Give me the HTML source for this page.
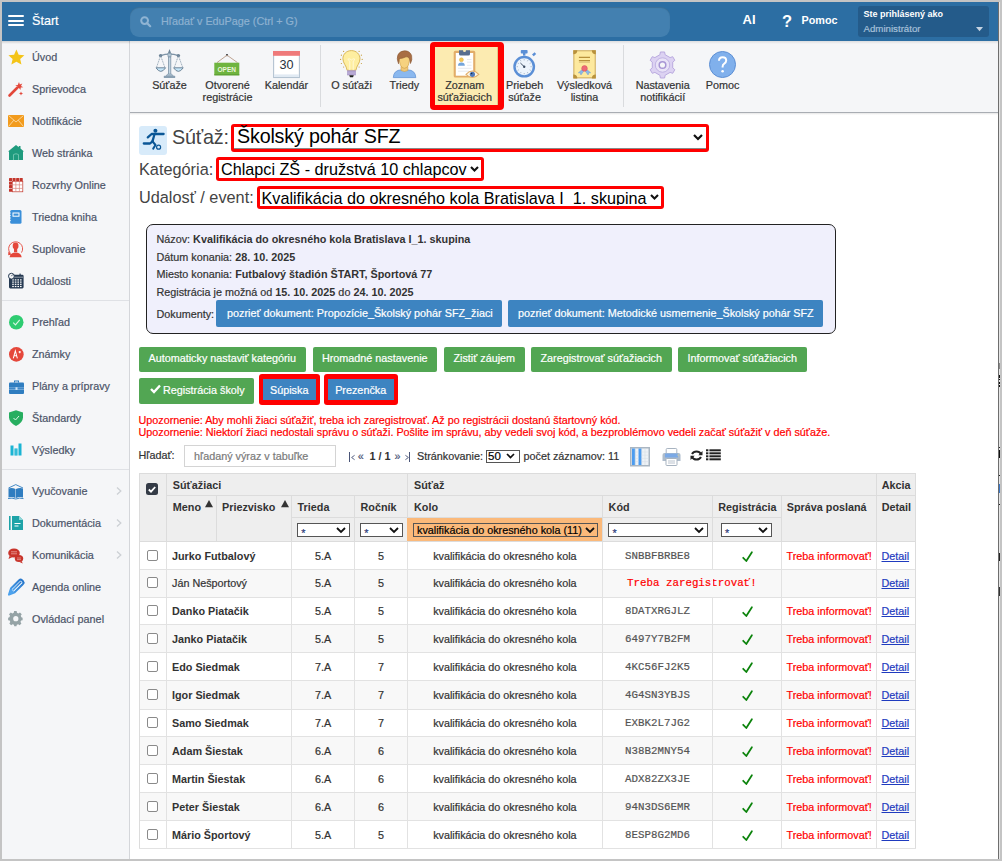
<!DOCTYPE html>
<html><head><meta charset="utf-8"><style>
*{box-sizing:border-box;margin:0;padding:0}
html,body{width:1002px;height:861px;overflow:hidden;background:#c4c4c4}
body{font-family:"Liberation Sans",sans-serif;font-size:10.8px;color:#333;position:relative}
.a{position:absolute;white-space:nowrap;line-height:normal;-webkit-text-stroke:0.2px currentColor}
b,.bd{-webkit-text-stroke:0 !important}
svg.a{overflow:visible}
</style></head><body>
<div class="a" style="left:2px;top:2px;width:996px;height:857px;background:#fff"></div>
<div class="a" style="left:998px;top:2px;width:1px;height:857px;background:#6e6e6e"></div>
<div class="a" style="left:999px;top:2px;width:1px;height:857px;background:#e6e6e6"></div>
<div class="a" style="left:2px;top:2px;width:996px;height:39px;background:#2c6ea3"></div>
<div class="a" style="left:7.5px;top:14.75px;width:16px;height:2px;background:#fff;border-radius:1px"></div>
<div class="a" style="left:7.5px;top:19.5px;width:16px;height:2px;background:#fff;border-radius:1px"></div>
<div class="a" style="left:7.5px;top:24.25px;width:16px;height:2px;background:#fff;border-radius:1px"></div>
<div class="a" style="left:32px;top:14px;font-size:12.6px;color:#fff;-webkit-text-stroke:0.2px #fff">Štart</div>
<div class="a" style="left:130px;top:6.5px;width:540px;height:30.5px;background:#4380b0;border-radius:9px;box-shadow:inset 0 1px 1px rgba(0,0,0,.15)"></div>
<svg class="a" style="left:140px;top:16px" width="11" height="11" viewBox="0 0 11 11"><circle cx="4.6" cy="4.6" r="3.4" fill="none" stroke="#90b4d3" stroke-width="2"/><line x1="7.2" y1="7.2" x2="10.2" y2="10.2" stroke="#90b4d3" stroke-width="2.2" stroke-linecap="round"/></svg>
<div class="a" style="left:161px;top:15px;font-size:10.8px;color:#8db1d0;">Hľadať v EduPage (Ctrl + G)</div>
<div class="a bd" style="left:742.5px;top:12px;font-size:13px;color:#fff;font-weight:bold;">AI</div>
<div class="a bd" style="left:782px;top:11.5px;font-size:16.5px;color:#fff;font-weight:bold;">?</div>
<div class="a bd" style="left:801.5px;top:14px;font-size:10.8px;color:#fff;font-weight:bold;">Pomoc</div>
<div class="a" style="left:858px;top:6px;width:131px;height:31px;background:#245b8a;border-radius:3px"></div>
<div class="a bd" style="left:863.5px;top:9px;font-size:9px;color:#fff;font-weight:bold;">Ste prihlásený ako</div>
<div class="a" style="left:863.5px;top:23px;font-size:9.7px;color:#a7c0d9;">Administrátor</div>
<svg class="a" style="left:975.5px;top:26.7px" width="7" height="4.3" viewBox="0 0 7 4.3"><path d="M0 0H7L3.5 4.3Z" fill="#c6d4e2"/></svg>
<div class="a" style="left:2px;top:41px;width:127px;height:818px;background:#f5f6f8"></div>
<div class="a" style="left:129px;top:41px;width:1px;height:818px;background:#d4d6da"></div>
<div class="a" style="left:2px;top:41px;width:996px;height:3px;background:linear-gradient(rgba(0,0,0,.16),rgba(0,0,0,0))"></div>
<svg class="a" style="left:7.6px;top:49px" width="16.8" height="15.8" viewBox="0 0 16 15" preserveAspectRatio="none"><path d="M8 0.5L10.2 5.4L15.6 5.9L11.6 9.5L12.8 14.8L8 12L3.2 14.8L4.4 9.5L0.4 5.9L5.8 5.4Z" fill="#f4c418"/></svg>
<div class="a" style="left:32px;top:51px;font-size:10.8px;color:#4b5468;">Úvod</div>
<svg class="a" style="left:8px;top:81px" width="16" height="16" viewBox="0 0 16 16" preserveAspectRatio="none"><path d="M1.5 14.5L9 7" stroke="#e3473a" stroke-width="2.6" stroke-linecap="round"/><path d="M11 1L11.8 3.4L14.3 2.6L13 4.9L15.3 6.2L12.7 6.4L12.5 9L11 6.9L8.8 8.1L9.6 5.7L7.3 4.6L9.8 4.1Z" fill="#e3473a"/><path d="M13 10.5L13.7 12L15.2 12.5L13.7 13L13 14.5L12.3 13L10.8 12.5L12.3 12Z" fill="#e3473a"/></svg>
<div class="a" style="left:32px;top:83px;font-size:10.8px;color:#4b5468;">Sprievodca</div>
<svg class="a" style="left:8px;top:115px" width="16" height="12" viewBox="0 0 16 12" preserveAspectRatio="none"><rect x="0" y="0" width="16" height="12" fill="#f29b1d"/><path d="M0.5 0.5L8 7L15.5 0.5M0.5 11.5L5.8 5.2M15.5 11.5L10.2 5.2" stroke="#fbe3b8" stroke-width="0.8" fill="none"/></svg>
<div class="a" style="left:32px;top:115px;font-size:10.8px;color:#4b5468;">Notifikácie</div>
<svg class="a" style="left:8px;top:145px" width="16" height="15" viewBox="0 0 16 15" preserveAspectRatio="none"><path d="M8 0L0 6.5H1V15H15V6.5H16L12.5 3.6V1H10.8V2.2Z" fill="#1f9b7e"/><path d="M5.5 15V9.5Q8 8 10.5 9.5V15" fill="none" stroke="#6cc3ad" stroke-width="1"/></svg>
<div class="a" style="left:32px;top:147px;font-size:10.8px;color:#4b5468;">Web stránka</div>
<svg class="a" style="left:9px;top:178px" width="14" height="14" viewBox="0 0 14 14" preserveAspectRatio="none"><rect x="0.00" y="0" width="3.1" height="3.1" rx="0.6" fill="#c3352b"/><rect x="3.55" y="0" width="3.1" height="3.1" rx="0.6" fill="#c3352b"/><rect x="7.10" y="0" width="3.1" height="3.1" rx="0.6" fill="#c3352b"/><rect x="10.65" y="0" width="3.1" height="3.1" rx="0.6" fill="#c3352b"/><rect x="0" y="3.55" width="3.1" height="3.1" rx="0.6" fill="#c3352b"/><rect x="0" y="7.10" width="3.1" height="3.1" rx="0.6" fill="#c3352b"/><rect x="0" y="10.65" width="3.1" height="3.1" rx="0.6" fill="#c3352b"/><rect x="3.3" y="3.3" width="10.5" height="10.5" fill="#fff" stroke="#c3352b" stroke-width="0.7"/><path d="M6.85 3.3V13.8M10.4 3.3V13.8M3.3 6.85H13.8M3.3 10.4H13.8" stroke="#d8857e" stroke-width="0.7"/></svg>
<div class="a" style="left:32px;top:179px;font-size:10.8px;color:#4b5468;">Rozvrhy Online</div>
<svg class="a" style="left:9px;top:210px" width="13" height="14" viewBox="0 0 13 14" preserveAspectRatio="none"><rect x="1.2" y="0" width="11.3" height="13.8" rx="1.5" fill="#3a8fd9"/><rect x="4" y="3" width="6" height="3.2" fill="none" stroke="#fff" stroke-width="1"/><path d="M0 3h2M0 5.5h2M0 8h2M0 10.5h2" stroke="#fff" stroke-width="0.6"/></svg>
<div class="a" style="left:32px;top:211px;font-size:10.8px;color:#4b5468;">Triedna kniha</div>
<svg class="a" style="left:7px;top:240px" width="17" height="18" viewBox="0 0 17 18" preserveAspectRatio="none"><path d="M3.2 13.2A7 7 0 1 1 14.5 12.6" fill="none" stroke="#e4473a" stroke-width="0.9"/><path d="M1.4 11.6L4.6 14.6L1.2 15.2Z" fill="#e4473a"/><ellipse cx="8.6" cy="5.9" rx="2.9" ry="3.3" fill="#e4473a"/><rect x="7" y="8" width="3.2" height="4" fill="#e4473a"/><path d="M2.6 17.2Q3 13.3 7.5 12.6H9.7Q14.2 13.3 14.7 17.2Z" fill="#e4473a"/></svg>
<div class="a" style="left:32px;top:243px;font-size:10.8px;color:#4b5468;">Suplovanie</div>
<svg class="a" style="left:7.5px;top:273px" width="16" height="16" viewBox="0 0 16 16" preserveAspectRatio="none"><rect x="1" y="1.8" width="14.6" height="13.6" rx="1.3" fill="#263a52"/><rect x="4" y="1" width="1.2" height="2" fill="#263a52"/><rect x="11.5" y="0.6" width="1.2" height="2.2" fill="#263a52"/><path d="M1.8 4.2H15" stroke="#fff" stroke-width="0.5"/><rect x="4.2" y="6.3" width="1.6" height="1.2" fill="#fff"/><rect x="4.2" y="8.5" width="1.6" height="1.2" fill="#fff"/><rect x="4.2" y="10.7" width="1.6" height="1.2" fill="#fff"/><rect x="4.2" y="12.9" width="1.6" height="1.2" fill="#fff"/><rect x="6.8" y="6.3" width="1.6" height="1.2" fill="#fff"/><rect x="6.8" y="8.5" width="1.6" height="1.2" fill="#fff"/><rect x="6.8" y="10.7" width="1.6" height="1.2" fill="#fff"/><rect x="6.8" y="12.9" width="1.6" height="1.2" fill="#fff"/><rect x="9.4" y="6.3" width="1.6" height="1.2" fill="#fff"/><rect x="9.4" y="8.5" width="1.6" height="1.2" fill="#fff"/><rect x="9.4" y="10.7" width="1.6" height="1.2" fill="#fff"/><rect x="9.4" y="12.9" width="1.6" height="1.2" fill="#fff"/><rect x="12.0" y="6.3" width="1.6" height="1.2" fill="#fff"/><rect x="12.0" y="8.5" width="1.6" height="1.2" fill="#fff"/><rect x="12.0" y="10.7" width="1.6" height="1.2" fill="#fff"/><rect x="12.0" y="12.9" width="1.6" height="1.2" fill="#fff"/><circle cx="3.4" cy="3.2" r="2.9" fill="#f5f6f8" stroke="#263a52" stroke-width="1"/><path d="M3.4 3.2L4.6 1.6" stroke="#263a52" stroke-width="0.8"/></svg>
<div class="a" style="left:32px;top:275px;font-size:10.8px;color:#4b5468;">Udalosti</div>
<svg class="a" style="left:8.8px;top:314.6px" width="14.5" height="14.5" viewBox="0 0 13 13" preserveAspectRatio="none"><circle cx="6.5" cy="6.5" r="6.5" fill="#2ecc71"/><path d="M3.8 6.8L5.8 8.8L9.6 4.4" stroke="#d8f7e4" stroke-width="1" fill="none"/></svg>
<div class="a" style="left:32px;top:316px;font-size:10.8px;color:#4b5468;">Prehľad</div>
<svg class="a" style="left:8.6px;top:346.8px" width="14.7" height="14.7" viewBox="0 0 13 13" preserveAspectRatio="none"><circle cx="6.5" cy="6.5" r="6.5" fill="#e5473b"/><path d="M3.8 10L5.6 3.5L7.4 10M4.4 7.8H6.8M8.5 4.5H10.5M9.5 3.5V5.5" stroke="#fff" stroke-width="0.9" fill="none"/></svg>
<div class="a" style="left:32px;top:348px;font-size:10.8px;color:#4b5468;">Známky</div>
<svg class="a" style="left:9px;top:379.5px" width="15" height="14.5" viewBox="0 0 15 14" preserveAspectRatio="none"><rect x="0" y="2.5" width="15" height="11" rx="1" fill="#2f7dc0"/><path d="M5.5 2.5V1H9.5V2.5" stroke="#2f7dc0" stroke-width="1" fill="none"/><path d="M0 7.5H15M0 9.2H15" stroke="#9ac4e8" stroke-width="0.6"/><rect x="6.5" y="7" width="2" height="2.6" fill="#cfe3f5"/></svg>
<div class="a" style="left:32px;top:380px;font-size:10.8px;color:#4b5468;">Plány a prípravy</div>
<svg class="a" style="left:9px;top:410px" width="14" height="16" viewBox="0 0 14 16" preserveAspectRatio="none"><path d="M7 0.2L14 2.6V7.5Q13.6 13 7 16Q0.4 13 0 7.5V2.6Z" fill="#27ae60"/><path d="M4.5 8L6.5 10L10 6" stroke="#dff5e7" stroke-width="1" fill="none"/></svg>
<div class="a" style="left:32px;top:412px;font-size:10.8px;color:#4b5468;">Štandardy</div>
<svg class="a" style="left:10px;top:443px" width="12" height="13" viewBox="0 0 12 13" preserveAspectRatio="none"><rect x="0.5" y="2.5" width="3" height="10" fill="#1ab4d3"/><rect x="4.5" y="5.5" width="3" height="7" fill="#6fd1e5"/><rect x="8.5" y="0.5" width="3" height="12" fill="#1ab4d3"/><rect x="4.5" y="5.5" width="3" height="7" fill="#1ab4d3" opacity=".7"/></svg>
<div class="a" style="left:32px;top:444px;font-size:10.8px;color:#4b5468;">Výsledky</div>
<svg class="a" style="left:8px;top:484px" width="16" height="16" viewBox="0 0 16 16" preserveAspectRatio="none"><path d="M0.5 4.5Q4 3.5 7.5 5V14Q4 12.5 0.5 13.5Z" fill="#2f7dc0"/><path d="M15 4.5Q11.5 3.5 8 5V14Q11.5 12.5 15 13.5Z" fill="#2f7dc0"/><path d="M0.5 4L7.75 0.6L15 4" stroke="#2f7dc0" stroke-width="0.9" fill="none"/><path d="M0 14.6Q4 13.5 7.75 15Q11.5 13.5 15.5 14.6" stroke="#2f7dc0" stroke-width="0.9" fill="none"/></svg>
<div class="a" style="left:32px;top:485px;font-size:10.8px;color:#4b5468;">Vyučovanie</div>
<svg class="a" style="left:9px;top:515.5px" width="14" height="14" viewBox="0 0 14 14" preserveAspectRatio="none"><rect x="0" y="0" width="1.6" height="14" fill="#1ea3a8"/><path d="M3 0H10L14 4V14H3Z" fill="#1ea3a8"/><path d="M10 0V4H14" fill="#8ed6d8"/><path d="M5.5 7.5H11.5M5.5 10H9.5" stroke="#fff" stroke-width="1.2"/></svg>
<div class="a" style="left:32px;top:517px;font-size:10.8px;color:#4b5468;">Dokumentácia</div>
<svg class="a" style="left:8px;top:548px" width="16" height="16" viewBox="0 0 16 16" preserveAspectRatio="none"><ellipse cx="6" cy="5" rx="5.8" ry="4.6" fill="#c8342b"/><path d="M1.5 8L0.5 11L4.5 9Z" fill="#c8342b"/><ellipse cx="11" cy="10.5" rx="4.2" ry="3.6" fill="#c8342b"/><path d="M13.5 13L14.8 15.5L11.5 14Z" fill="#c8342b"/><path d="M3 3.8H9M3 5.8H9" stroke="#e9a39d" stroke-width="0.8"/><path d="M9 10H13M9 11.6H13" stroke="#e9a39d" stroke-width="0.7"/></svg>
<div class="a" style="left:32px;top:549px;font-size:10.8px;color:#4b5468;">Komunikácia</div>
<svg class="a" style="left:7.8px;top:578.5px" width="16" height="17" viewBox="0 0 16 17" preserveAspectRatio="none"><defs><linearGradient id="pg" x1="0" y1="1" x2="1" y2="0"><stop offset="0" stop-color="#4ea3ee"/><stop offset="1" stop-color="#2474c9"/></linearGradient></defs><path d="M1 15.6L3 9.6L11.3 1.3Q12.6 0.1 13.9 1.3L14.9 2.3Q16.1 3.6 14.9 4.9L6.6 13.2Z" fill="#fff" stroke="url(#pg)" stroke-width="2.1" stroke-linejoin="round"/><path d="M4.6 11.4L13.2 2.8" stroke="url(#pg)" stroke-width="1.5"/><path d="M0.6 16L2.8 9.8L6.4 13.4Z" fill="#4ea3ee"/></svg>
<div class="a" style="left:32px;top:581px;font-size:10.8px;color:#4b5468;">Agenda online</div>
<svg class="a" style="left:8px;top:610.5px" width="16" height="16" viewBox="0 0 16 16" preserveAspectRatio="none"><path d="M6 0H9L9.4 2.2L11 3L12.9 1.7L15 3.8L13.8 5.6L14.5 7.4L16 7.8V10.8L14.2 11.2L13.5 12.8L14.6 14.6L12.5 16.7L10.8 15.5L9.2 16.2L8.8 18H6.2L5.8 16.2L4.2 15.5L2.5 16.7L0.4 14.6L1.5 12.8L0.8 11.2L-1 10.8V7.8L0.5 7.4L1.2 5.6L0 3.8L2.1 1.7L4 3L5.6 2.2Z" transform="translate(1,0) scale(0.85)" fill="#95a3a6"/><circle cx="7.8" cy="7.7" r="2.6" fill="#f5f6f8"/></svg>
<div class="a" style="left:32px;top:613px;font-size:10.8px;color:#4b5468;">Ovládací panel</div>
<div class="a" style="left:2px;top:300px;width:127px;height:1px;background:#dfe1e5"></div>
<div class="a" style="left:2px;top:469px;width:127px;height:1px;background:#dfe1e5"></div>
<svg class="a" style="left:116.3px;top:487px" width="6" height="8" viewBox="0 0 6 8"><path d="M1 0.5L4.8 4L1 7.5" stroke="#ccd0d4" stroke-width="1.3" fill="none"/></svg>
<svg class="a" style="left:116.3px;top:519px" width="6" height="8" viewBox="0 0 6 8"><path d="M1 0.5L4.8 4L1 7.5" stroke="#ccd0d4" stroke-width="1.3" fill="none"/></svg>
<svg class="a" style="left:116.3px;top:551px" width="6" height="8" viewBox="0 0 6 8"><path d="M1 0.5L4.8 4L1 7.5" stroke="#ccd0d4" stroke-width="1.3" fill="none"/></svg>
<div class="a" style="left:130px;top:41px;width:868px;height:71px;background:#f5f6f8"></div>
<div class="a" style="left:130px;top:112px;width:868px;height:1px;background:#a9adb3"></div>
<div class="a" style="left:130px;top:113px;width:868px;height:2px;background:linear-gradient(rgba(0,0,0,.10),rgba(0,0,0,0))"></div>
<div class="a" style="left:130px;top:41px;width:868px;height:3px;background:linear-gradient(rgba(0,0,0,.10),rgba(0,0,0,0))"></div>
<div class="a" style="left:319.5px;top:45px;width:1px;height:62px;background:#d9dbde"></div>
<div class="a" style="left:623px;top:45px;width:1px;height:62px;background:#d9dbde"></div>
<div class="a" style="left:430px;top:42px;width:74px;height:68px;background:#ff0000;border-radius:4px"></div>
<div class="a" style="left:435px;top:47px;width:63px;height:58px;background:#fcebb1"></div>
<div class="a" style="left:497px;top:47px;width:1px;height:58px;background:#e2c98a"></div>
<svg class="a" style="left:150px;top:46px" width="40" height="34" viewBox="0 0 40 34"><path d="M19.5 3L21 7H18Z" fill="#6f869a"/><path d="M10.6 9.6Q19.5 6.8 28.4 9.6" stroke="#7d93a6" stroke-width="1.3" fill="none"/><circle cx="10.6" cy="9.6" r="1.7" fill="#6b8296"/><circle cx="28.4" cy="9.6" r="1.7" fill="#6b8296"/><path d="M17.6 7.5H21.4L20.8 11H18.2Z" fill="#b3c7d6" stroke="#7d93a6" stroke-width="0.7"/><rect x="18.4" y="11" width="2.4" height="17.5" fill="#c3d6e4" stroke="#7d93a6" stroke-width="0.8"/><path d="M17.6 28H21.6L23.2 30H16Z" fill="#b3c7d6" stroke="#7d93a6" stroke-width="0.6"/><rect x="13.8" y="29.8" width="11.4" height="2.2" rx="0.6" fill="#8aa0b2"/><path d="M10.6 9.6L6.4 21.8M10.6 9.6L15 21.8M28.4 9.6L24.2 21.8M28.4 9.6L32.8 21.8" stroke="#7d93a6" stroke-width="0.75" stroke-dasharray="1.2 0.6"/><path d="M6 21.8Q10.8 29 15.6 21.8Z" fill="#c5e6f8" stroke="#6f869a" stroke-width="1"/><path d="M23.6 21.8Q28.4 29 33.2 21.8Z" fill="#c5e6f8" stroke="#6f869a" stroke-width="1"/></svg>
<div class="a" style="left:109.5px;top:78.5px;width:120px;text-align:center;font-size:10.8px;color:#333;">Súťaže</div>
<svg class="a" style="left:213.5px;top:53.5px" width="26" height="22" viewBox="0 0 26 22"><circle cx="13" cy="1.2" r="1.1" fill="#2a2f36"/><path d="M3 8.6L13 1.2L23.5 8.6" stroke="#b89a86" stroke-width="0.9" fill="none"/><rect x="0.3" y="8.7" width="25" height="12.6" fill="#6fb43f"/><rect x="0.3" y="20.3" width="25" height="1" fill="#5a9a33"/><text x="12.8" y="18.3" text-anchor="middle" font-family="Liberation Sans" font-weight="bold" font-size="8" fill="#e9f5dc" transform="translate(12.8 0) scale(0.82 1) translate(-12.8 0)">OPEN</text></svg>
<div class="a" style="left:167.5px;top:78.5px;width:120px;text-align:center;font-size:10.8px;color:#333;">Otvorené</div>
<div class="a" style="left:167.5px;top:90.5px;width:120px;text-align:center;font-size:10.8px;color:#333;">registrácie</div>
<svg class="a" style="left:273px;top:51px" width="27" height="27" viewBox="0 0 27 27"><rect x="0.6" y="0.5" width="25.8" height="26" fill="#fff" stroke="#b4c3d1" stroke-width="1.1"/><rect x="0" y="0" width="27" height="4.8" fill="#ef7a7a"/><rect x="1.1" y="23.4" width="24.8" height="2.6" fill="#e1eaf3"/><text x="13.5" y="18.3" text-anchor="middle" font-family="Liberation Sans" font-size="12.6" fill="#27313d">30</text></svg>
<div class="a" style="left:226.39999999999998px;top:78.5px;width:120px;text-align:center;font-size:10.8px;color:#333;">Kalendár</div>
<svg class="a" style="left:336px;top:46px" width="32" height="36" viewBox="0 0 32 36"><path d="M15.4 4.6C10.2 4.6 6.9 8.4 6.9 12.8C6.9 17.2 10.5 19.6 11.1 24.3H19.9C20.5 19.6 24 17.2 24 12.8C24 8.4 20.6 4.6 15.4 4.6Z" fill="#feeea0" stroke="#d6b14f" stroke-width="0.9"/><path d="M13.8 24V15.2L11.8 13.4Q13 12.2 14.2 13.2L15.4 14L16.6 13.2Q17.8 12.2 19 13.4L17.2 15.2V24" stroke="#fff9dc" stroke-width="0.9" fill="none"/><rect x="11.1" y="24.3" width="8.8" height="5" fill="#a998c9"/><path d="M11.3 26.2H19.7M11.3 27.8H19.7" stroke="#cdc2e3" stroke-width="0.6"/><path d="M13.2 29.3H17.8L17 31.3H14Z" fill="#222"/><circle cx="4.6" cy="13.4" r="0.6" fill="#c9a040"/><circle cx="5.4" cy="9.2" r="0.6" fill="#c9a040"/><circle cx="5.4" cy="17.5" r="0.6" fill="#c9a040"/><circle cx="7.6" cy="5.4" r="0.6" fill="#c9a040"/><circle cx="7.6" cy="21" r="0.6" fill="#c9a040"/><circle cx="26.2" cy="13.4" r="0.6" fill="#c9a040"/><circle cx="25.4" cy="9.2" r="0.6" fill="#c9a040"/><circle cx="25.4" cy="17.5" r="0.6" fill="#c9a040"/><circle cx="23.1" cy="5.4" r="0.6" fill="#c9a040"/><circle cx="23.1" cy="21" r="0.6" fill="#c9a040"/></svg>
<div class="a" style="left:291.5px;top:78.5px;width:120px;text-align:center;font-size:10.8px;color:#333;">O súťaži</div>
<svg class="a" style="left:388px;top:48px" width="32" height="32" viewBox="0 0 32 32"><path d="M5.3 29.6Q5.6 22 13.5 21.9H19.5Q27.5 22 27.8 29.6Z" fill="#8ab8ef" stroke="#5f92d6" stroke-width="0.8"/><path d="M13 18.5V22.5Q16.4 24.5 19.8 22.5V18.5Z" fill="#f0c878" stroke="#cf9f4a" stroke-width="0.6"/><path d="M11.2 7.5Q11 20.3 16.4 20.3Q21.8 20.3 21.6 7.5Z" fill="#f6d27f" stroke="#d3a34c" stroke-width="0.7"/><path d="M10.5 15.8Q8.3 10.5 10 6.5Q12.5 2.6 16.8 2.8Q22 3 23.6 7.5Q24.6 11.5 22.5 15.5L21.6 11Q20.5 8.2 18 8.8Q14 10.8 11.3 10.5Z" fill="#a86e44" stroke="#8a5733" stroke-width="0.6"/></svg>
<div class="a" style="left:344.3px;top:78.5px;width:120px;text-align:center;font-size:10.8px;color:#333;">Triedy</div>
<svg class="a" style="left:448px;top:46px" width="36" height="36" viewBox="0 0 36 36"><rect x="5.7" y="4.8" width="21.6" height="26.8" rx="1.6" fill="#e2ad69"/><rect x="7.8" y="7" width="17.4" height="22.7" fill="#fff"/><path d="M11 4.3H22V8Q22 9.6 20.4 9.6H12.6Q11 9.6 11 8Z" fill="#566d8f"/><circle cx="16.5" cy="4.6" r="1.5" fill="#f5e7b5"/><circle cx="13.4" cy="13.8" r="2" fill="#f4c654" stroke="#dcae44" stroke-width="0.5"/><path d="M10 19.7Q10 16.4 13.4 16.4Q16.8 16.4 16.8 19.7Z" fill="#74a5db"/><path d="M19 13.5H23.5M19 16.2H23.5M19 19.3H23.5M10 22.3H23.5M10 25.2H21" stroke="#dfe5ec" stroke-width="0.8"/><path d="M18 28.3Q24.4 21.8 30.8 28.3Q24.4 34.8 18 28.3Z" fill="#fff7e4" stroke="#e2ad69" stroke-width="1.1"/><circle cx="24.4" cy="28.3" r="2.6" fill="#4f78ba"/><circle cx="23.6" cy="27.5" r="0.8" fill="#1d2c44"/></svg>
<div class="a" style="left:404.7px;top:78.5px;width:120px;text-align:center;font-size:10.8px;color:#333;">Zoznam</div>
<div class="a" style="left:404.7px;top:90.5px;width:120px;text-align:center;font-size:10.8px;color:#333;">súťažiacich</div>
<svg class="a" style="left:511.8px;top:50px" width="25" height="28" viewBox="0 0 25 28"><rect x="8.8" y="0" width="6.8" height="3.6" rx="0.8" fill="#5b8fd6"/><rect x="11" y="3" width="2.4" height="2.6" fill="#5b8fd6"/><path d="M20 4.4L22.6 2.2L24.2 4L21.7 6.3Z" fill="#5b8fd6"/><circle cx="12.2" cy="16.7" r="10.9" fill="#5b8fd6"/><circle cx="12.2" cy="16.7" r="8.5" fill="#edf4fc"/><path d="M12.2 16.7L8.4 13" stroke="#3c4d63" stroke-width="1"/><circle cx="12.2" cy="16.7" r="1.2" fill="#3c4d63"/><path d="M18.50 16.70L19.70 16.70" stroke="#8a9cb3" stroke-width="0.7"/><path d="M17.66 19.85L18.70 20.45" stroke="#8a9cb3" stroke-width="0.7"/><path d="M15.35 22.16L15.95 23.20" stroke="#8a9cb3" stroke-width="0.7"/><path d="M12.20 23.00L12.20 24.20" stroke="#8a9cb3" stroke-width="0.7"/><path d="M9.05 22.16L8.45 23.20" stroke="#8a9cb3" stroke-width="0.7"/><path d="M6.74 19.85L5.70 20.45" stroke="#8a9cb3" stroke-width="0.7"/><path d="M5.90 16.70L4.70 16.70" stroke="#8a9cb3" stroke-width="0.7"/><path d="M6.74 13.55L5.70 12.95" stroke="#8a9cb3" stroke-width="0.7"/><path d="M9.05 11.24L8.45 10.20" stroke="#8a9cb3" stroke-width="0.7"/><path d="M12.20 10.40L12.20 9.20" stroke="#8a9cb3" stroke-width="0.7"/><path d="M15.35 11.24L15.95 10.20" stroke="#8a9cb3" stroke-width="0.7"/><path d="M17.66 13.55L18.70 12.95" stroke="#8a9cb3" stroke-width="0.7"/></svg>
<div class="a" style="left:464.6px;top:78.5px;width:120px;text-align:center;font-size:10.8px;color:#333;">Priebeh</div>
<div class="a" style="left:464.6px;top:90.5px;width:120px;text-align:center;font-size:10.8px;color:#333;">súťaže</div>
<svg class="a" style="left:568px;top:46px" width="34" height="36" viewBox="0 0 34 36"><rect x="5.3" y="4.2" width="22.5" height="28.2" fill="#d2b060"/><rect x="6.4" y="5.3" width="20.3" height="26" fill="#fde99e"/><path d="M5.3 4.2H9.3A4 4 0 0 1 5.3 8.2Z M27.8 4.2H23.8A4 4 0 0 0 27.8 8.2Z M5.3 32.4H9.3A4 4 0 0 0 5.3 28.4Z M27.8 32.4H23.8A4 4 0 0 1 27.8 28.4Z" fill="#b8913c"/><path d="M10.9 11.3H22M10.9 14.6H22" stroke="#b8913c" stroke-width="1.2"/><path d="M10.9 16.2H22" stroke="#d9bf75" stroke-width="1"/><path d="M14.8 23L10.3 26.8L12.2 26.8L12.9 29L16.2 24.5Z M18.2 23L22.7 26.8L20.8 26.8L20.1 29L16.8 24.5Z" fill="#89b8ea" stroke="#5e90cf" stroke-width="0.4"/><circle cx="16.5" cy="22.4" r="2.8" fill="#ee6a76" stroke="#d24f5c" stroke-width="0.5"/></svg>
<div class="a" style="left:524.5px;top:78.5px;width:120px;text-align:center;font-size:10.8px;color:#333;">Výsledková</div>
<div class="a" style="left:524.5px;top:90.5px;width:120px;text-align:center;font-size:10.8px;color:#333;">listina</div>
<svg class="a" style="left:649px;top:50.5px" width="27" height="28" viewBox="0 0 27 28"><path d="M10.88 3.73L11.40 0.97L15.60 0.97L16.12 3.73L21.08 6.59L23.73 5.66L25.84 9.31L23.71 11.14L23.71 16.86L25.84 18.69L23.73 22.34L21.08 21.41L16.12 24.27L15.60 27.03L11.40 27.03L10.88 24.27L5.92 21.41L3.27 22.34L1.16 18.69L3.29 16.86L3.29 11.14L1.16 9.31L3.27 5.66L5.92 6.59Z" fill="#dcd2f2" stroke="#b4a4dc" stroke-width="0.9" stroke-linejoin="round"/><circle cx="13.5" cy="14" r="7.2" fill="#e9e3f7" stroke="#b8a9de" stroke-width="0.8"/><circle cx="13.5" cy="14" r="3.3" fill="#f5f6f8" stroke="#a796d4" stroke-width="1.5"/></svg>
<div class="a" style="left:602.7px;top:78.5px;width:120px;text-align:center;font-size:10.8px;color:#333;">Nastavenia</div>
<div class="a" style="left:602.7px;top:90.5px;width:120px;text-align:center;font-size:10.8px;color:#333;">notifikácií</div>
<svg class="a" style="left:709px;top:50.8px" width="27" height="27" viewBox="0 0 27 27"><circle cx="13.5" cy="13.5" r="13" fill="#80b0ec" stroke="#5d8fd4" stroke-width="1"/><path d="M10 9.8Q10 6.2 13.6 6.2Q17.2 6.2 17.2 9.6Q17.2 11.6 15 12.8Q13.6 13.6 13.6 15.8V16.6" stroke="#fff" stroke-width="2" fill="none"/><circle cx="13.6" cy="20.3" r="1.3" fill="#fff"/></svg>
<div class="a" style="left:662.5px;top:78.5px;width:120px;text-align:center;font-size:10.8px;color:#333;">Pomoc</div>
<div class="a" style="left:139.1px;top:126px;width:28px;height:28.8px;background:#d8ebfa;border-radius:3px"></div>
<svg class="a" style="left:136px;top:122px" width="34" height="36" viewBox="0 0 34 36"><circle cx="19.4" cy="8.8" r="2" fill="#0b5796"/><path d="M11.8 15.4L15.6 12H27.6" stroke="#0b5796" stroke-width="2.3" stroke-linecap="round" stroke-linejoin="round" fill="none"/><path d="M17.4 12.2L19.6 12.2L17.6 19.8L15 20Z" fill="#0b5796"/><path d="M16.5 19.3L14 21.5H7.8" stroke="#0b5796" stroke-width="2.3" stroke-linecap="round" stroke-linejoin="round" fill="none"/><path d="M16.6 19.5L19.5 23L17.2 26.6" stroke="#0b5796" stroke-width="2" stroke-linecap="round" stroke-linejoin="round" fill="none"/><circle cx="22.6" cy="25.2" r="2" fill="none" stroke="#0b5796" stroke-width="1.2"/></svg>
<div class="a bd" style="left:172px;top:125.5px;font-size:19.8px;color:#444;letter-spacing:-0.2px">Súťaž:</div>
<div class="a" style="left:230.5px;top:124.3px;width:478px;height:27.6px;background:#ff0000;border-radius:3px"></div>
<div class="a" style="left:233.5px;top:127.3px;width:472px;height:21.3px;background:#fff"></div>
<div class="a" style="left:233.5px;top:147.6px;width:472px;height:1px;background:#8a8a8a"></div>
<div class="a bd" style="left:237px;top:125px;font-size:19.7px;color:#000;letter-spacing:-0.17px">Školský pohár SFZ</div>
<svg class="a" style="left:693px;top:134px" width="10" height="6" viewBox="0 0 10 6"><path d="M1 1L5 5L9 1" stroke="#111" stroke-width="2.2" fill="none"/></svg>
<div class="a bd" style="left:139px;top:159.5px;font-size:16.3px;color:#444;">Kategória:</div>
<div class="a" style="left:216px;top:157px;width:268px;height:23.5px;background:#ff0000;border-radius:3px"></div>
<div class="a" style="left:219px;top:160px;width:262px;height:17.5px;background:#fff"></div>
<div class="a bd" style="left:221px;top:159.5px;font-size:16.2px;color:#000;">Chlapci ZŠ - družstvá 10 chlapcov</div>
<svg class="a" style="left:469.5px;top:166px" width="9" height="6" viewBox="0 0 9 6"><path d="M1 1L4.5 4.5L8 1" stroke="#111" stroke-width="2.1" fill="none"/></svg>
<div class="a bd" style="left:139px;top:188px;font-size:16.3px;color:#444;">Udalosť / event:</div>
<div class="a" style="left:256.5px;top:186px;width:407px;height:22.5px;background:#ff0000;border-radius:3px"></div>
<div class="a" style="left:259.5px;top:189px;width:401px;height:16.5px;background:#fff;overflow:hidden"></div>
<div class="a" style="left:259.5px;top:189px;width:390px;height:15.5px;overflow:hidden"><div class="a bd" style="left:2px;top:0px;font-size:16.2px;color:#000">Kvalifikácia do okresného kola Bratislava I_1. skupina</div></div>
<svg class="a" style="left:649.5px;top:194px" width="9" height="6" viewBox="0 0 9 6"><path d="M1 1L4.5 4.5L8 1" stroke="#111" stroke-width="2.1" fill="none"/></svg>
<div class="a" style="left:146px;top:223.5px;width:690px;height:110px;background:#f0f0fc;border:1.5px solid #222;border-radius:7px"></div>
<div class="a" style="left:156.5px;top:233px;font-size:10.8px;color:#333;">Názov: <b>Kvalifikácia do okresného kola Bratislava I_1. skupina</b></div>
<div class="a" style="left:156.5px;top:250.5px;font-size:10.8px;color:#333;">Dátum konania: <b>28. 10. 2025</b></div>
<div class="a" style="left:156.5px;top:268px;font-size:10.8px;color:#333;">Miesto konania: <b>Futbalový štadión ŠTART, Športová 77</b></div>
<div class="a" style="left:156.5px;top:285.5px;font-size:10.8px;color:#333;">Registrácia je možná od <b>15. 10. 2025</b> do <b>24. 10. 2025</b></div>
<div class="a" style="left:156.5px;top:307.5px;font-size:10.8px;color:#333;">Dokumenty:</div>
<div class="a" style="left:216px;top:300.3px;width:286px;height:26.5px;background:#3d84c1;border-radius:2px"></div>
<div class="a" style="left:227px;top:306.5px;font-size:10.8px;color:#fff;">pozrieť dokument: Propozície_Školský pohár SFZ_žiaci</div>
<div class="a" style="left:508px;top:300.3px;width:315px;height:26.5px;background:#3d84c1;border-radius:2px"></div>
<div class="a" style="left:518px;top:306.5px;font-size:10.8px;color:#fff;">pozrieť dokument: Metodické usmernenie_Školský pohár SFZ</div>
<div class="a" style="left:139px;top:346.5px;width:166.5px;height:25.2px;background:#52a653;border-radius:2px"></div>
<div class="a" style="left:139.0px;top:352px;width:166.5px;text-align:center;font-size:10.8px;color:#fff;">Automaticky nastaviť kategóriu</div>
<div class="a" style="left:312.5px;top:346.5px;width:124.5px;height:25.2px;background:#52a653;border-radius:2px"></div>
<div class="a" style="left:312.5px;top:352px;width:124.5px;text-align:center;font-size:10.8px;color:#fff;">Hromadné nastavenie</div>
<div class="a" style="left:443.5px;top:346.5px;width:81.5px;height:25.2px;background:#52a653;border-radius:2px"></div>
<div class="a" style="left:443.5px;top:352px;width:81.5px;text-align:center;font-size:10.8px;color:#fff;">Zistiť záujem</div>
<div class="a" style="left:530.5px;top:346.5px;width:141.5px;height:25.2px;background:#52a653;border-radius:2px"></div>
<div class="a" style="left:530.5px;top:352px;width:141.5px;text-align:center;font-size:10.8px;color:#fff;">Zaregistrovať súťažiacich</div>
<div class="a" style="left:677.5px;top:346.5px;width:129.5px;height:25.2px;background:#52a653;border-radius:2px"></div>
<div class="a" style="left:677.5px;top:352px;width:129.5px;text-align:center;font-size:10.8px;color:#fff;">Informovať súťažiacich</div>
<div class="a" style="left:139px;top:377.5px;width:115px;height:26.5px;background:#52a653;border-radius:2px"></div>
<svg class="a" style="left:149.5px;top:384px" width="11" height="10" viewBox="0 0 11 10"><path d="M1 5L4 8L10 1.5" stroke="#fff" stroke-width="2.4" fill="none"/></svg>
<div class="a" style="left:163px;top:384px;font-size:10.8px;color:#fff;">Registrácia školy</div>
<div class="a" style="left:258.5px;top:374px;width:61.5px;height:31px;background:#ff0000;border-radius:3px"></div>
<div class="a" style="left:263px;top:379.3px;width:52.5px;height:20.8px;background:#3d84c1"></div>
<div class="a" style="left:263.2px;top:384px;width:52px;text-align:center;font-size:10.8px;color:#fff;">Súpiska</div>
<div class="a" style="left:323.5px;top:374px;width:74.5px;height:31px;background:#ff0000;border-radius:3px"></div>
<div class="a" style="left:328px;top:379.3px;width:65.5px;height:20.8px;background:#3d84c1"></div>
<div class="a" style="left:328.7px;top:384px;width:64px;text-align:center;font-size:10.8px;color:#fff;">Prezenčka</div>
<div class="a" style="left:138.5px;top:413.5px;font-size:10.8px;color:#ff0000;">Upozornenie: Aby mohli žiaci súťažiť, treba ich zaregistrovať. Až po registrácii dostanú štartovný kód.</div>
<div class="a" style="left:138.5px;top:425.5px;font-size:10.8px;color:#ff0000;">Upozornenie: Niektorí žiaci nedostali správu o súťaži. Pošlite im správu, aby vedeli svoj kód, a bezproblémovo vedeli začať súťažiť v deň súťaže.</div>
<div class="a" style="left:138.5px;top:449px;font-size:10.8px;color:#333;">Hľadať:</div>
<div class="a" style="left:184px;top:444.5px;width:152px;height:22px;background:#fff;border:1px solid #d4d4d4"></div>
<div class="a" style="left:194px;top:449.5px;font-size:10.8px;color:#7a7a7a;">hľadaný výraz v tabuľke</div>
<div class="a" style="left:349.2px;top:452px;width:1.2px;height:9.6px;background:#4a5578"></div>
<svg class="a" style="left:350.8px;top:454.5px" width="4" height="5" viewBox="0 0 4 5"><path d="M3.6 0.3L0.6 2.5L3.6 4.7" stroke="#4a5578" stroke-width="0.9" fill="none"/></svg>
<div class="a" style="left:357.8px;top:449.5px;font-size:10.8px;color:#4a5578;">«</div>
<div class="a bd" style="left:369.5px;top:449.5px;font-size:10.8px;color:#333;font-weight:bold;">1 / 1</div>
<div class="a" style="left:394.5px;top:449.5px;font-size:10.8px;color:#4a5578;">»</div>
<svg class="a" style="left:405px;top:454.5px" width="4" height="5" viewBox="0 0 4 5"><path d="M0.4 0.3L3.4 2.5L0.4 4.7" stroke="#4a5578" stroke-width="0.9" fill="none"/></svg>
<div class="a" style="left:409.2px;top:452px;width:1.2px;height:9.6px;background:#4a5578"></div>
<div class="a" style="left:417px;top:449.5px;font-size:10.8px;color:#333;">Stránkovanie:</div>
<div class="a" style="left:485.5px;top:450px;width:34px;height:12.5px;background:#fff;border:1px solid #555"></div>
<div class="a" style="left:488px;top:449.8px;font-size:11.5px;color:#000;">50</div>
<svg class="a" style="left:506px;top:453px" width="9" height="6" viewBox="0 0 9 6"><path d="M1 1L4.5 4.5L8 1" stroke="#111" stroke-width="1.7" fill="none"/></svg>
<div class="a" style="left:523.5px;top:449.5px;font-size:10.8px;color:#333;">počet záznamov: 11</div>
<svg class="a" style="left:630px;top:447px" width="20" height="19.5" viewBox="0 0 20 19.5"><rect x="0" y="0" width="20" height="19.5" fill="#aab6c2"/><rect x="1.5" y="1.5" width="17" height="16.5" fill="#eef2f6"/><rect x="2" y="1.5" width="3.2" height="16.5" fill="#4c9cf0"/><rect x="8.5" y="1.5" width="3.2" height="16.5" fill="#4c9cf0"/><path d="M5.2 1.5V18M11.7 1.5V18M15 1.5V18" stroke="#d5dde6" stroke-width="0.6"/><path d="M5.2 5H8.5M5.2 8.2H8.5M5.2 11.4H8.5M5.2 14.6H8.5M11.7 5H18.5M11.7 8.2H18.5M11.7 11.4H18.5M11.7 14.6H18.5" stroke="#d5dde6" stroke-width="0.5"/></svg>
<svg class="a" style="left:662px;top:448px" width="19" height="18" viewBox="0 0 19 18"><rect x="4.2" y="0.5" width="10.6" height="6" rx="1" fill="#fff" stroke="#a7b3c0" stroke-width="1"/><path d="M0.5 7Q0.5 5 2.5 5H16.5Q18.5 5 18.5 7V13H0.5Z" fill="#aebccb"/><rect x="3" y="5.5" width="13" height="4" fill="#7ba9e6"/><circle cx="16" cy="7" r="0.6" fill="#f5e27a"/><rect x="4" y="10.5" width="11" height="7" rx="0.8" fill="#fff" stroke="#a7b3c0" stroke-width="1"/><path d="M6 13H13M6 15H13" stroke="#a7b3c0" stroke-width="0.8"/></svg>
<svg class="a" style="left:689.5px;top:449.5px" width="13" height="11" viewBox="0 0 13 11"><path d="M11 4A5 4.6 0 0 0 2 4" stroke="#222" stroke-width="2" fill="none"/><path d="M12.5 1V5.3H8.3Z" fill="#222"/><path d="M2 7A5 4.6 0 0 0 11 7" stroke="#222" stroke-width="2" fill="none"/><path d="M0.5 10V5.7H4.7Z" fill="#222"/></svg>
<svg class="a" style="left:705.5px;top:449px" width="15" height="11.5" viewBox="0 0 15 11.5"><rect x="0" y="0.3" width="2.4" height="2" fill="#222"/><rect x="0" y="3.3" width="2.4" height="2" fill="#222"/><rect x="0" y="6.3" width="2.4" height="2" fill="#222"/><rect x="0" y="9.3" width="2.4" height="2" fill="#222"/><rect x="3.4" y="0.3" width="11.4" height="2" fill="#222"/><rect x="3.4" y="3.3" width="11.4" height="2" fill="#222"/><rect x="3.4" y="6.3" width="11.4" height="2" fill="#222"/><rect x="3.4" y="9.3" width="11.4" height="2" fill="#222"/></svg>
<div class="a" style="left:138.5px;top:473.2px;width:777.0px;height:68.30000000000001px;background:#eeeeee"></div>
<div class="a" style="left:138.5px;top:569.4px;width:777.0px;height:27.600000000000023px;background:#f8f8f8"></div>
<div class="a" style="left:138.5px;top:624.9px;width:777.0px;height:27.800000000000068px;background:#f8f8f8"></div>
<div class="a" style="left:138.5px;top:680.7px;width:777.0px;height:28.299999999999955px;background:#f8f8f8"></div>
<div class="a" style="left:138.5px;top:736.8px;width:777.0px;height:27.700000000000045px;background:#f8f8f8"></div>
<div class="a" style="left:138.5px;top:792.2px;width:777.0px;height:28.299999999999955px;background:#f8f8f8"></div>
<div class="a" style="left:138.5px;top:568.9px;width:777.0px;height:1px;background:#e2e2e2"></div>
<div class="a" style="left:138.5px;top:596.5px;width:777.0px;height:1px;background:#e2e2e2"></div>
<div class="a" style="left:138.5px;top:624.4px;width:777.0px;height:1px;background:#e2e2e2"></div>
<div class="a" style="left:138.5px;top:652.2px;width:777.0px;height:1px;background:#e2e2e2"></div>
<div class="a" style="left:138.5px;top:680.2px;width:777.0px;height:1px;background:#e2e2e2"></div>
<div class="a" style="left:138.5px;top:708.5px;width:777.0px;height:1px;background:#e2e2e2"></div>
<div class="a" style="left:138.5px;top:736.3px;width:777.0px;height:1px;background:#e2e2e2"></div>
<div class="a" style="left:138.5px;top:764.0px;width:777.0px;height:1px;background:#e2e2e2"></div>
<div class="a" style="left:138.5px;top:791.7px;width:777.0px;height:1px;background:#e2e2e2"></div>
<div class="a" style="left:138.5px;top:820.0px;width:777.0px;height:1px;background:#e2e2e2"></div>
<div class="a" style="left:138.5px;top:847.9px;width:777.0px;height:1px;background:#e2e2e2"></div>
<div class="a" style="left:146.8px;top:550.0px;width:11px;height:11px;background:#fff;border:1px solid #8a8a8a;border-radius:2px"></div>
<div class="a bd" style="left:172px;top:550.0px;font-size:10.8px;color:#333;font-weight:bold;">Jurko Futbalový</div>
<div class="a" style="left:293.1px;top:550.0px;width:60px;text-align:center;font-size:10.8px;color:#333;">5.A</div>
<div class="a" style="left:356.0px;top:550.0px;width:50px;text-align:center;font-size:10.8px;color:#333;">5</div>
<div class="a" style="left:409.9px;top:550.0px;width:190px;text-align:center;font-size:10.8px;color:#333;">kvalifikácia do okresného kola</div>
<div class="a" style="left:602.5px;top:550.0px;width:110px;text-align:center;font-family:'Liberation Mono',monospace;font-size:10.8px;color:#555">SNBBFBRBE8</div>
<svg class="a" style="left:741.5px;top:551.0px" width="11" height="11" viewBox="0 0 11 11"><path d="M1.2 6.8L4.3 10L9.9 1.2" stroke="#0b830b" stroke-width="1.75" stroke-linecap="round" stroke-linejoin="round" fill="none"/></svg>
<div class="a" style="left:786.5px;top:550.0px;font-size:10.8px;color:#ff0000;">Treba informovať!</div>
<div class="a" style="left:881.5px;top:550.0px;font-size:10.8px;color:#1f3bbf;text-decoration:underline">Detail</div>
<div class="a" style="left:146.8px;top:577.0px;width:11px;height:11px;background:#fff;border:1px solid #8a8a8a;border-radius:2px"></div>
<div class="a" style="left:172px;top:577.0px;font-size:10.8px;color:#333;">Ján Nešportový</div>
<div class="a" style="left:293.1px;top:577.0px;width:60px;text-align:center;font-size:10.8px;color:#333;">5.A</div>
<div class="a" style="left:356.0px;top:577.0px;width:50px;text-align:center;font-size:10.8px;color:#333;">5</div>
<div class="a" style="left:409.9px;top:577.0px;width:190px;text-align:center;font-size:10.8px;color:#333;">kvalifikácia do okresného kola</div>
<div class="a" style="left:611.9px;top:577.0px;width:160px;text-align:center;font-family:'Liberation Mono',monospace;font-size:10.8px;color:#ff0000">Treba zaregistrovať!</div>
<div class="a" style="left:881.5px;top:577.0px;font-size:10.8px;color:#1f3bbf;text-decoration:underline">Detail</div>
<div class="a" style="left:146.8px;top:605.0px;width:11px;height:11px;background:#fff;border:1px solid #8a8a8a;border-radius:2px"></div>
<div class="a bd" style="left:172px;top:605.0px;font-size:10.8px;color:#333;font-weight:bold;">Danko Piatačik</div>
<div class="a" style="left:293.1px;top:605.0px;width:60px;text-align:center;font-size:10.8px;color:#333;">5.A</div>
<div class="a" style="left:356.0px;top:605.0px;width:50px;text-align:center;font-size:10.8px;color:#333;">5</div>
<div class="a" style="left:409.9px;top:605.0px;width:190px;text-align:center;font-size:10.8px;color:#333;">kvalifikácia do okresného kola</div>
<div class="a" style="left:602.5px;top:605.0px;width:110px;text-align:center;font-family:'Liberation Mono',monospace;font-size:10.8px;color:#555">8DATXRGJLZ</div>
<svg class="a" style="left:741.5px;top:606.0px" width="11" height="11" viewBox="0 0 11 11"><path d="M1.2 6.8L4.3 10L9.9 1.2" stroke="#0b830b" stroke-width="1.75" stroke-linecap="round" stroke-linejoin="round" fill="none"/></svg>
<div class="a" style="left:786.5px;top:605.0px;font-size:10.8px;color:#ff0000;">Treba informovať!</div>
<div class="a" style="left:881.5px;top:605.0px;font-size:10.8px;color:#1f3bbf;text-decoration:underline">Detail</div>
<div class="a" style="left:146.8px;top:633.0px;width:11px;height:11px;background:#fff;border:1px solid #8a8a8a;border-radius:2px"></div>
<div class="a bd" style="left:172px;top:633.0px;font-size:10.8px;color:#333;font-weight:bold;">Janko Piatačik</div>
<div class="a" style="left:293.1px;top:633.0px;width:60px;text-align:center;font-size:10.8px;color:#333;">5.A</div>
<div class="a" style="left:356.0px;top:633.0px;width:50px;text-align:center;font-size:10.8px;color:#333;">5</div>
<div class="a" style="left:409.9px;top:633.0px;width:190px;text-align:center;font-size:10.8px;color:#333;">kvalifikácia do okresného kola</div>
<div class="a" style="left:602.5px;top:633.0px;width:110px;text-align:center;font-family:'Liberation Mono',monospace;font-size:10.8px;color:#555">6497Y7B2FM</div>
<svg class="a" style="left:741.5px;top:634.0px" width="11" height="11" viewBox="0 0 11 11"><path d="M1.2 6.8L4.3 10L9.9 1.2" stroke="#0b830b" stroke-width="1.75" stroke-linecap="round" stroke-linejoin="round" fill="none"/></svg>
<div class="a" style="left:786.5px;top:633.0px;font-size:10.8px;color:#ff0000;">Treba informovať!</div>
<div class="a" style="left:881.5px;top:633.0px;font-size:10.8px;color:#1f3bbf;text-decoration:underline">Detail</div>
<div class="a" style="left:146.8px;top:661.0px;width:11px;height:11px;background:#fff;border:1px solid #8a8a8a;border-radius:2px"></div>
<div class="a bd" style="left:172px;top:661.0px;font-size:10.8px;color:#333;font-weight:bold;">Edo Siedmak</div>
<div class="a" style="left:293.1px;top:661.0px;width:60px;text-align:center;font-size:10.8px;color:#333;">7.A</div>
<div class="a" style="left:356.0px;top:661.0px;width:50px;text-align:center;font-size:10.8px;color:#333;">7</div>
<div class="a" style="left:409.9px;top:661.0px;width:190px;text-align:center;font-size:10.8px;color:#333;">kvalifikácia do okresného kola</div>
<div class="a" style="left:602.5px;top:661.0px;width:110px;text-align:center;font-family:'Liberation Mono',monospace;font-size:10.8px;color:#555">4KC56FJ2K5</div>
<svg class="a" style="left:741.5px;top:662.0px" width="11" height="11" viewBox="0 0 11 11"><path d="M1.2 6.8L4.3 10L9.9 1.2" stroke="#0b830b" stroke-width="1.75" stroke-linecap="round" stroke-linejoin="round" fill="none"/></svg>
<div class="a" style="left:786.5px;top:661.0px;font-size:10.8px;color:#ff0000;">Treba informovať!</div>
<div class="a" style="left:881.5px;top:661.0px;font-size:10.8px;color:#1f3bbf;text-decoration:underline">Detail</div>
<div class="a" style="left:146.8px;top:689.0px;width:11px;height:11px;background:#fff;border:1px solid #8a8a8a;border-radius:2px"></div>
<div class="a bd" style="left:172px;top:689.0px;font-size:10.8px;color:#333;font-weight:bold;">Igor Siedmak</div>
<div class="a" style="left:293.1px;top:689.0px;width:60px;text-align:center;font-size:10.8px;color:#333;">7.A</div>
<div class="a" style="left:356.0px;top:689.0px;width:50px;text-align:center;font-size:10.8px;color:#333;">7</div>
<div class="a" style="left:409.9px;top:689.0px;width:190px;text-align:center;font-size:10.8px;color:#333;">kvalifikácia do okresného kola</div>
<div class="a" style="left:602.5px;top:689.0px;width:110px;text-align:center;font-family:'Liberation Mono',monospace;font-size:10.8px;color:#555">4G4SN3YBJS</div>
<svg class="a" style="left:741.5px;top:690.0px" width="11" height="11" viewBox="0 0 11 11"><path d="M1.2 6.8L4.3 10L9.9 1.2" stroke="#0b830b" stroke-width="1.75" stroke-linecap="round" stroke-linejoin="round" fill="none"/></svg>
<div class="a" style="left:786.5px;top:689.0px;font-size:10.8px;color:#ff0000;">Treba informovať!</div>
<div class="a" style="left:881.5px;top:689.0px;font-size:10.8px;color:#1f3bbf;text-decoration:underline">Detail</div>
<div class="a" style="left:146.8px;top:717.0px;width:11px;height:11px;background:#fff;border:1px solid #8a8a8a;border-radius:2px"></div>
<div class="a bd" style="left:172px;top:717.0px;font-size:10.8px;color:#333;font-weight:bold;">Samo Siedmak</div>
<div class="a" style="left:293.1px;top:717.0px;width:60px;text-align:center;font-size:10.8px;color:#333;">7.A</div>
<div class="a" style="left:356.0px;top:717.0px;width:50px;text-align:center;font-size:10.8px;color:#333;">7</div>
<div class="a" style="left:409.9px;top:717.0px;width:190px;text-align:center;font-size:10.8px;color:#333;">kvalifikácia do okresného kola</div>
<div class="a" style="left:602.5px;top:717.0px;width:110px;text-align:center;font-family:'Liberation Mono',monospace;font-size:10.8px;color:#555">EXBK2L7JG2</div>
<svg class="a" style="left:741.5px;top:718.0px" width="11" height="11" viewBox="0 0 11 11"><path d="M1.2 6.8L4.3 10L9.9 1.2" stroke="#0b830b" stroke-width="1.75" stroke-linecap="round" stroke-linejoin="round" fill="none"/></svg>
<div class="a" style="left:786.5px;top:717.0px;font-size:10.8px;color:#ff0000;">Treba informovať!</div>
<div class="a" style="left:881.5px;top:717.0px;font-size:10.8px;color:#1f3bbf;text-decoration:underline">Detail</div>
<div class="a" style="left:146.8px;top:745.0px;width:11px;height:11px;background:#fff;border:1px solid #8a8a8a;border-radius:2px"></div>
<div class="a bd" style="left:172px;top:745.0px;font-size:10.8px;color:#333;font-weight:bold;">Adam Šiestak</div>
<div class="a" style="left:293.1px;top:745.0px;width:60px;text-align:center;font-size:10.8px;color:#333;">6.A</div>
<div class="a" style="left:356.0px;top:745.0px;width:50px;text-align:center;font-size:10.8px;color:#333;">6</div>
<div class="a" style="left:409.9px;top:745.0px;width:190px;text-align:center;font-size:10.8px;color:#333;">kvalifikácia do okresného kola</div>
<div class="a" style="left:602.5px;top:745.0px;width:110px;text-align:center;font-family:'Liberation Mono',monospace;font-size:10.8px;color:#555">N38B2MNY54</div>
<svg class="a" style="left:741.5px;top:746.0px" width="11" height="11" viewBox="0 0 11 11"><path d="M1.2 6.8L4.3 10L9.9 1.2" stroke="#0b830b" stroke-width="1.75" stroke-linecap="round" stroke-linejoin="round" fill="none"/></svg>
<div class="a" style="left:786.5px;top:745.0px;font-size:10.8px;color:#ff0000;">Treba informovať!</div>
<div class="a" style="left:881.5px;top:745.0px;font-size:10.8px;color:#1f3bbf;text-decoration:underline">Detail</div>
<div class="a" style="left:146.8px;top:773.0px;width:11px;height:11px;background:#fff;border:1px solid #8a8a8a;border-radius:2px"></div>
<div class="a bd" style="left:172px;top:773.0px;font-size:10.8px;color:#333;font-weight:bold;">Martin Šiestak</div>
<div class="a" style="left:293.1px;top:773.0px;width:60px;text-align:center;font-size:10.8px;color:#333;">6.A</div>
<div class="a" style="left:356.0px;top:773.0px;width:50px;text-align:center;font-size:10.8px;color:#333;">6</div>
<div class="a" style="left:409.9px;top:773.0px;width:190px;text-align:center;font-size:10.8px;color:#333;">kvalifikácia do okresného kola</div>
<div class="a" style="left:602.5px;top:773.0px;width:110px;text-align:center;font-family:'Liberation Mono',monospace;font-size:10.8px;color:#555">ADX82ZX3JE</div>
<svg class="a" style="left:741.5px;top:774.0px" width="11" height="11" viewBox="0 0 11 11"><path d="M1.2 6.8L4.3 10L9.9 1.2" stroke="#0b830b" stroke-width="1.75" stroke-linecap="round" stroke-linejoin="round" fill="none"/></svg>
<div class="a" style="left:786.5px;top:773.0px;font-size:10.8px;color:#ff0000;">Treba informovať!</div>
<div class="a" style="left:881.5px;top:773.0px;font-size:10.8px;color:#1f3bbf;text-decoration:underline">Detail</div>
<div class="a" style="left:146.8px;top:801.0px;width:11px;height:11px;background:#fff;border:1px solid #8a8a8a;border-radius:2px"></div>
<div class="a bd" style="left:172px;top:801.0px;font-size:10.8px;color:#333;font-weight:bold;">Peter Šiestak</div>
<div class="a" style="left:293.1px;top:801.0px;width:60px;text-align:center;font-size:10.8px;color:#333;">6.A</div>
<div class="a" style="left:356.0px;top:801.0px;width:50px;text-align:center;font-size:10.8px;color:#333;">6</div>
<div class="a" style="left:409.9px;top:801.0px;width:190px;text-align:center;font-size:10.8px;color:#333;">kvalifikácia do okresného kola</div>
<div class="a" style="left:602.5px;top:801.0px;width:110px;text-align:center;font-family:'Liberation Mono',monospace;font-size:10.8px;color:#555">94N3DS6EMR</div>
<svg class="a" style="left:741.5px;top:802.0px" width="11" height="11" viewBox="0 0 11 11"><path d="M1.2 6.8L4.3 10L9.9 1.2" stroke="#0b830b" stroke-width="1.75" stroke-linecap="round" stroke-linejoin="round" fill="none"/></svg>
<div class="a" style="left:786.5px;top:801.0px;font-size:10.8px;color:#ff0000;">Treba informovať!</div>
<div class="a" style="left:881.5px;top:801.0px;font-size:10.8px;color:#1f3bbf;text-decoration:underline">Detail</div>
<div class="a" style="left:146.8px;top:829.0px;width:11px;height:11px;background:#fff;border:1px solid #8a8a8a;border-radius:2px"></div>
<div class="a bd" style="left:172px;top:829.0px;font-size:10.8px;color:#333;font-weight:bold;">Mário Športový</div>
<div class="a" style="left:293.1px;top:829.0px;width:60px;text-align:center;font-size:10.8px;color:#333;">5.A</div>
<div class="a" style="left:356.0px;top:829.0px;width:50px;text-align:center;font-size:10.8px;color:#333;">5</div>
<div class="a" style="left:409.9px;top:829.0px;width:190px;text-align:center;font-size:10.8px;color:#333;">kvalifikácia do okresného kola</div>
<div class="a" style="left:602.5px;top:829.0px;width:110px;text-align:center;font-family:'Liberation Mono',monospace;font-size:10.8px;color:#555">8ESP8G2MD6</div>
<svg class="a" style="left:741.5px;top:830.0px" width="11" height="11" viewBox="0 0 11 11"><path d="M1.2 6.8L4.3 10L9.9 1.2" stroke="#0b830b" stroke-width="1.75" stroke-linecap="round" stroke-linejoin="round" fill="none"/></svg>
<div class="a" style="left:786.5px;top:829.0px;font-size:10.8px;color:#ff0000;">Treba informovať!</div>
<div class="a" style="left:881.5px;top:829.0px;font-size:10.8px;color:#1f3bbf;text-decoration:underline">Detail</div>
<div class="a" style="left:166.0px;top:541.5px;width:1px;height:306.9px;background:#e2e2e2"></div>
<div class="a" style="left:291.1px;top:541.5px;width:1px;height:306.9px;background:#e2e2e2"></div>
<div class="a" style="left:354.1px;top:541.5px;width:1px;height:306.9px;background:#e2e2e2"></div>
<div class="a" style="left:406.9px;top:541.5px;width:1px;height:306.9px;background:#e2e2e2"></div>
<div class="a" style="left:601.9px;top:541.5px;width:1px;height:306.9px;background:#e2e2e2"></div>
<div class="a" style="left:712.1px;top:541.5px;width:1px;height:306.9px;background:#e2e2e2"></div>
<div class="a" style="left:780.9px;top:541.5px;width:1px;height:306.9px;background:#e2e2e2"></div>
<div class="a" style="left:875.9px;top:541.5px;width:1px;height:306.9px;background:#e2e2e2"></div>
<div class="a" style="left:712.1px;top:569.9px;width:1px;height:26.9px;background:#f8f8f8"></div>
<div class="a" style="left:138.5px;top:473.2px;width:777.0px;height:1px;background:#dcdcdc"></div>
<div class="a" style="left:138.5px;top:473.2px;width:1px;height:375.3px;background:#dcdcdc"></div>
<div class="a" style="left:914.5px;top:473.2px;width:1px;height:375.3px;background:#dcdcdc"></div>
<div class="a" style="left:138.5px;top:541.0px;width:777.0px;height:1px;background:#dcdcdc"></div>
<div class="a" style="left:166.5px;top:495.2px;width:749.0px;height:1px;background:#dcdcdc"></div>
<div class="a" style="left:166.0px;top:473.2px;width:1px;height:68.30000000000001px;background:#dcdcdc"></div>
<div class="a" style="left:406.9px;top:473.2px;width:1px;height:68.30000000000001px;background:#dcdcdc"></div>
<div class="a" style="left:875.9px;top:473.2px;width:1px;height:68.30000000000001px;background:#dcdcdc"></div>
<div class="a" style="left:216.0px;top:495.2px;width:1px;height:46.30000000000001px;background:#dcdcdc"></div>
<div class="a" style="left:291.1px;top:495.2px;width:1px;height:46.30000000000001px;background:#dcdcdc"></div>
<div class="a" style="left:354.1px;top:495.2px;width:1px;height:46.30000000000001px;background:#dcdcdc"></div>
<div class="a" style="left:601.9px;top:495.2px;width:1px;height:46.30000000000001px;background:#dcdcdc"></div>
<div class="a" style="left:712.1px;top:495.2px;width:1px;height:46.30000000000001px;background:#dcdcdc"></div>
<div class="a" style="left:780.9px;top:495.2px;width:1px;height:46.30000000000001px;background:#dcdcdc"></div>
<div class="a" style="left:291.6px;top:517.4px;width:489.79999999999995px;height:1px;background:#dcdcdc"></div>
<div class="a" style="left:146px;top:483px;width:12px;height:12px;background:#343b46;border-radius:2.5px"></div>
<svg class="a" style="left:148px;top:485.5px" width="8" height="7" viewBox="0 0 8 7"><path d="M0.8 3.5L3 5.6L7.2 1" stroke="#fff" stroke-width="1.8" fill="none"/></svg>
<div class="a bd" style="left:172.8px;top:479.2px;font-size:10.8px;color:#333;font-weight:bold;">Súťažiaci</div>
<div class="a bd" style="left:414px;top:479.2px;font-size:10.8px;color:#333;font-weight:bold;">Súťaž</div>
<div class="a bd" style="left:881.7px;top:479.2px;font-size:10.8px;color:#333;font-weight:bold;">Akcia</div>
<div class="a bd" style="left:172.8px;top:501px;font-size:10.8px;color:#333;font-weight:bold;">Meno</div>
<svg class="a" style="left:205px;top:499.8px" width="8" height="7.2" viewBox="0 0 8 7.2"><path d="M4 0L8 7.2H0Z" fill="#333"/></svg>
<div class="a bd" style="left:222px;top:501px;font-size:10.8px;color:#333;font-weight:bold;">Priezvisko</div>
<svg class="a" style="left:281px;top:499.8px" width="8" height="7.2" viewBox="0 0 8 7.2"><path d="M4 0L8 7.2H0Z" fill="#333"/></svg>
<div class="a bd" style="left:297.6px;top:501px;font-size:10.8px;color:#333;font-weight:bold;">Trieda</div>
<div class="a bd" style="left:360.5px;top:501px;font-size:10.8px;color:#333;font-weight:bold;">Ročník</div>
<div class="a bd" style="left:414px;top:501px;font-size:10.8px;color:#333;font-weight:bold;">Kolo</div>
<div class="a bd" style="left:608.6px;top:501px;font-size:10.8px;color:#333;font-weight:bold;">Kód</div>
<div class="a bd" style="left:718.3px;top:501px;font-size:10.8px;color:#333;font-weight:bold;">Registrácia</div>
<div class="a bd" style="left:786.8px;top:501px;font-size:10.8px;color:#333;font-weight:bold;">Správa poslaná</div>
<div class="a bd" style="left:881.7px;top:501px;font-size:10.8px;color:#333;font-weight:bold;">Detail</div>
<div class="a" style="left:407.4px;top:517.9px;width:195.0px;height:23.100000000000023px;background:#fbb97a"></div>
<div class="a" style="left:297.2px;top:523px;width:53.0px;height:13.6px;background:#fff;border:1px solid #555"></div>
<div class="a" style="left:301.2px;top:527px;font-size:10.8px;color:#2b3a7a;">*</div>
<svg class="a" style="left:336.2px;top:527px" width="10" height="6" viewBox="0 0 10 6"><path d="M1 1L5 5L9 1" stroke="#111" stroke-width="1.8" fill="none"/></svg>
<div class="a" style="left:360.2px;top:523px;width:42.60000000000002px;height:13.6px;background:#fff;border:1px solid #555"></div>
<div class="a" style="left:364.2px;top:527px;font-size:10.8px;color:#2b3a7a;">*</div>
<svg class="a" style="left:388.8px;top:527px" width="10" height="6" viewBox="0 0 10 6"><path d="M1 1L5 5L9 1" stroke="#111" stroke-width="1.8" fill="none"/></svg>
<div class="a" style="left:608.4px;top:523px;width:99.60000000000002px;height:13.6px;background:#fff;border:1px solid #555"></div>
<div class="a" style="left:612.4px;top:527px;font-size:10.8px;color:#2b3a7a;">*</div>
<svg class="a" style="left:694px;top:527px" width="10" height="6" viewBox="0 0 10 6"><path d="M1 1L5 5L9 1" stroke="#111" stroke-width="1.8" fill="none"/></svg>
<div class="a" style="left:721px;top:523px;width:51px;height:13.6px;background:#fff;border:1px solid #555"></div>
<div class="a" style="left:725px;top:527px;font-size:10.8px;color:#2b3a7a;">*</div>
<svg class="a" style="left:758px;top:527px" width="10" height="6" viewBox="0 0 10 6"><path d="M1 1L5 5L9 1" stroke="#111" stroke-width="1.8" fill="none"/></svg>
<div class="a" style="left:413.4px;top:522.8px;width:184.60000000000002px;height:13.8px;background:#fbb97a;border:1px solid #555"></div>
<div class="a" style="left:417px;top:523.8px;font-size:10.8px;color:#000;">kvalifikácia do okresného kola (11)</div>
<svg class="a" style="left:584.5px;top:527px" width="10" height="6" viewBox="0 0 10 6"><path d="M1 1L5 5L9 1" stroke="#111" stroke-width="1.8" fill="none"/></svg>
<div class="a" style="left:999px;top:363px;width:1.2px;height:5.600000000000023px;background:#8a8a8a"></div>
<div class="a" style="left:999px;top:375px;width:1.2px;height:2.5px;background:#111"></div>
<div class="a" style="left:999px;top:378.5px;width:1.2px;height:1.0px;background:#111"></div>
<div class="a" style="left:999px;top:381.5px;width:1.2px;height:2.5px;background:#111"></div>
<div class="a" style="left:999px;top:384.8px;width:1.2px;height:1.8000000000000114px;background:#111"></div>
<div class="a" style="left:999px;top:446.5px;width:1.2px;height:1.0px;background:#222"></div>
<div class="a" style="left:999px;top:450.2px;width:1.2px;height:7.400000000000034px;background:#111"></div>
<div class="a" style="left:999px;top:475.3px;width:1.2px;height:1.0px;background:#222"></div>
<div class="a" style="left:999px;top:484px;width:1.2px;height:8.5px;background:#3a78c8"></div>
<div class="a" style="left:999px;top:503.5px;width:1.2px;height:1.5px;background:#222"></div>
<div class="a" style="left:999px;top:553px;width:1.2px;height:8px;background:#222"></div>
<div class="a" style="left:999px;top:587px;width:1.2px;height:9px;background:#333"></div>
</body></html>
